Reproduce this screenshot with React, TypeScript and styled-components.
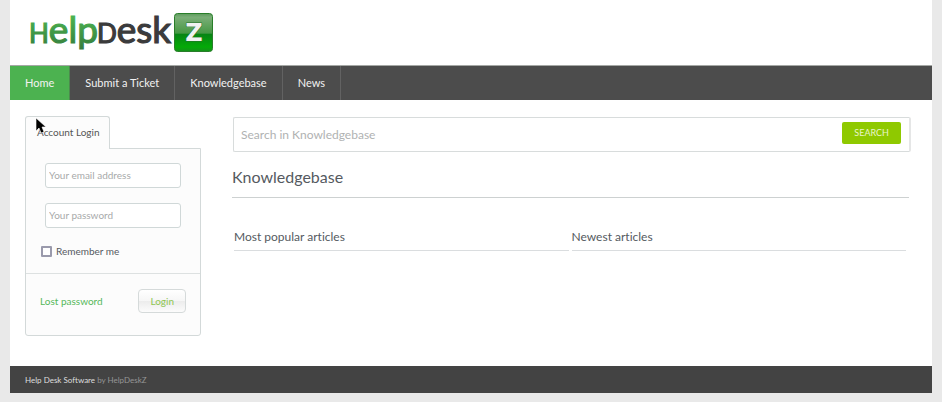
import React from 'react';
import styled, { createGlobalStyle } from 'styled-components';

const GlobalStyle = createGlobalStyle`
  * { box-sizing: border-box; }
  body {
    margin: 0;
    background: #e9e9e9;
    color: #555a5f;
    font-family: Lato, 'Open Sans', sans-serif;
    font-size: 10px;
    font-variant-ligatures: none;
    line-height: 16px;
  }
  input, button { font: inherit; }
  a { text-decoration: none; }
`;

const Page = styled.div`
  margin: 0 10px 9px;
  background: #fff;
`;

const Header = styled.header`
  height: 65px;
  padding: 5px 18px;
`;

const Nav = styled.nav`
  display: flex;
  height: 35px;
  background: #4c4c4c;
  border-top: 1px solid #a5a8a5;
`;

const NavLink = styled.a<{ $active?: boolean }>`
  padding: 0 15px;
  border-right: 1px solid ${(p) => (p.$active ? '#4b8a4d' : '#626262')};
  background: ${(p) => (p.$active ? '#4cb250' : 'transparent')};
  color: #f2f2f2;
  font-size: 11px;
  line-height: 34px;
`;

const Content = styled.div`
  display: flex;
  align-items: flex-start;
  gap: 31px;
  padding: 16px 23px 30px 15px;
`;

const Sidebar = styled.aside`
  flex: 0 0 176px;
`;

const Tab = styled.h2`
  position: relative;
  z-index: 1;
  width: fit-content;
  height: 33px;
  margin: 0 0 -1px;
  padding: 0 9px 0 11px;
  border: 1px solid #d3d9d9;
  border-bottom: 0;
  border-radius: 3px 3px 0 0;
  background: #fcfcfc;
  color: #555;
  font-size: 10px;
  font-weight: 400;
  line-height: 31px;
`;

const Pointer = styled.svg`
  position: absolute;
  left: 9px;
  top: 0;
`;

const LoginForm = styled.form`
  border: 1px solid #d3d9d9;
  border-radius: 0 0 3px 3px;
  background: #fcfcfc;
`;

const Fields = styled.div`
  display: flex;
  flex-direction: column;
  gap: 15px;
  padding: 14px 19px 0;
`;

const Field = styled.input`
  width: 100%;
  height: 25px;
  padding: 0 3px 1px;
  border: 1px solid #d0d8d8;
  border-radius: 3px;
  background: #fff;
  color: #555;
  &::placeholder { color: #a8aaaa; opacity: 1; }
`;

const Remember = styled.label`
  display: flex;
  align-items: center;
  gap: 4px;
  padding: 15px 15px 14px;
  border-bottom: 1px solid #dde1e1;
`;

const Checkbox = styled.input`
  appearance: none;
  width: 11px;
  height: 11px;
  margin: 0;
  border: 2px solid #9a9aac;
  border-radius: 1px;
  background: #fff;
  &:checked { background: #4cb250; }
`;

const Actions = styled.div`
  display: flex;
  align-items: center;
  justify-content: space-between;
  padding: 15px 14px 22px;
`;

const LostLink = styled.a`
  color: #55b85a;
`;

const LoginButton = styled.button`
  height: 24px;
  padding: 0 11px;
  border: 1px solid #d5dada;
  border-radius: 4px;
  background: linear-gradient(#fff 0%, #f6f6f6 50%, #ececec 51%, #fcfcfc 100%);
  color: #8fc653;
`;

const Main = styled.main`
  flex: 1;
  min-width: 0;
`;

const Search = styled.form`
  display: flex;
  align-items: flex-start;
  height: 35px;
  margin: 1px -2px 14px 1px;
  padding: 4px 8px 0 7px;
  border: 1px solid #d8dcdc;
  border-right: 2px solid #e5e6e6;
  border-radius: 2px;
  background: #fff;
`;

const SearchInput = styled.input`
  flex: 1;
  min-width: 0;
  height: 24px;
  padding: 0;
  border: 0;
  outline: 0;
  font-size: 12px;
  &::placeholder { color: #b0b2b2; opacity: 1; }
`;

const SearchButton = styled.button`
  height: 22px;
  padding: 0 12px;
  border: 0;
  border-radius: 2px;
  background: #8fc900;
  color: #e9f5cb;
  font-size: 9px;
`;

const Title = styled.h1`
  margin: 0 0 30px;
  padding-bottom: 9px;
  border-bottom: 1px solid #cdd1d1;
  font-size: 16px;
  font-weight: 400;
  line-height: 22px;
`;

const Columns = styled.div`
  display: grid;
  grid-template-columns: 1fr 1fr;
  gap: 3px;
  padding: 0 3px 0 2px;
`;

const ListTitle = styled.h2`
  margin: 0;
  padding-bottom: 4px;
  border-bottom: 1px solid #dadddf;
  font-size: 12px;
  font-weight: 400;
  line-height: 18px;
`;

const Footer = styled.footer`
  padding: 6px 15px 5px;
  background: #434343;
  color: #969696;
  font-size: 8px;
`;

const FooterLink = styled.a`
  color: #dedede;
`;

function Logo() {
  return (
    <svg width="188" height="56" viewBox="28 5 188 56" role="img" aria-label="HelpDeskZ">
      <defs>
        <linearGradient id="word" gradientUnits="userSpaceOnUse" x1="0" y1="12" x2="0" y2="53">
          <stop offset="0" stopColor="#4fba53" />
          <stop offset="1" stopColor="#32763b" />
        </linearGradient>
        <linearGradient id="tile" x1="0" y1="0" x2="0" y2="1">
          <stop offset="0" stopColor="#5d9b5b" />
          <stop offset="0.1" stopColor="#7aae77" />
          <stop offset="0.52" stopColor="#469844" />
          <stop offset="0.54" stopColor="#078414" />
          <stop offset="0.88" stopColor="#04aa08" />
          <stop offset="1" stopColor="#168f1b" />
        </linearGradient>
      </defs>
      <g fontFamily="Lato, sans-serif" fontSize="37" strokeWidth="1.2">
        <text x="29" y="43" fill="url(#word)" stroke="url(#word)">
          <tspan fontSize="26">H</tspan>elp
        </text>
        <text x="97" y="43" fill="#3b3b3c" stroke="#3b3b3c">
          <tspan fontSize="26">D</tspan>esk
        </text>
      </g>
      <rect x="174.5" y="13.5" width="38" height="38" rx="3" fill="url(#tile)" stroke="#297e2a" />
      <text x="194" y="41" textAnchor="middle" fontFamily="DejaVu Sans, sans-serif" fontWeight="700" fontSize="24" fill="#f1f2f1" stroke="#25702a" strokeWidth="1" paintOrder="stroke">Z</text>
    </svg>
  );
}

export default function App() {
  return (
    <>
      <GlobalStyle />
      <Page>
        <Header><Logo /></Header>
        <Nav>
          <NavLink href="#home" $active>Home</NavLink>
          <NavLink href="#ticket">Submit a Ticket</NavLink>
          <NavLink href="#knowledgebase">Knowledgebase</NavLink>
          <NavLink href="#news">News</NavLink>
        </Nav>
        <Content>
          <Sidebar>
            <Tab>
              Account Login
              <Pointer width="12" height="18" viewBox="0 0 12 18" aria-hidden="true">
                <path d="M1 1v13l3-3 2 5 3-1-2-5h4z" fill="#000" stroke="#fff" strokeWidth="0.6" />
              </Pointer>
            </Tab>
            <LoginForm onSubmit={(e) => e.preventDefault()}>
              <Fields>
                <Field type="email" placeholder="Your email address" aria-label="Your email address" />
                <Field type="password" placeholder="Your password" aria-label="Your password" />
              </Fields>
              <Remember>
                <Checkbox type="checkbox" />
                Remember me
              </Remember>
              <Actions>
                <LostLink href="#lost">Lost password</LostLink>
                <LoginButton type="submit">Login</LoginButton>
              </Actions>
            </LoginForm>
          </Sidebar>
          <Main>
            <Search onSubmit={(e) => e.preventDefault()}>
              <SearchInput type="text" placeholder="Search in Knowledgebase" aria-label="Search in Knowledgebase" />
              <SearchButton type="submit">SEARCH</SearchButton>
            </Search>
            <Title>Knowledgebase</Title>
            <Columns>
              <ListTitle>Most popular articles</ListTitle>
              <ListTitle>Newest articles</ListTitle>
            </Columns>
          </Main>
        </Content>
        <Footer>
          <FooterLink href="#software">Help Desk Software</FooterLink> by HelpDeskZ
        </Footer>
      </Page>
    </>
  );
}
